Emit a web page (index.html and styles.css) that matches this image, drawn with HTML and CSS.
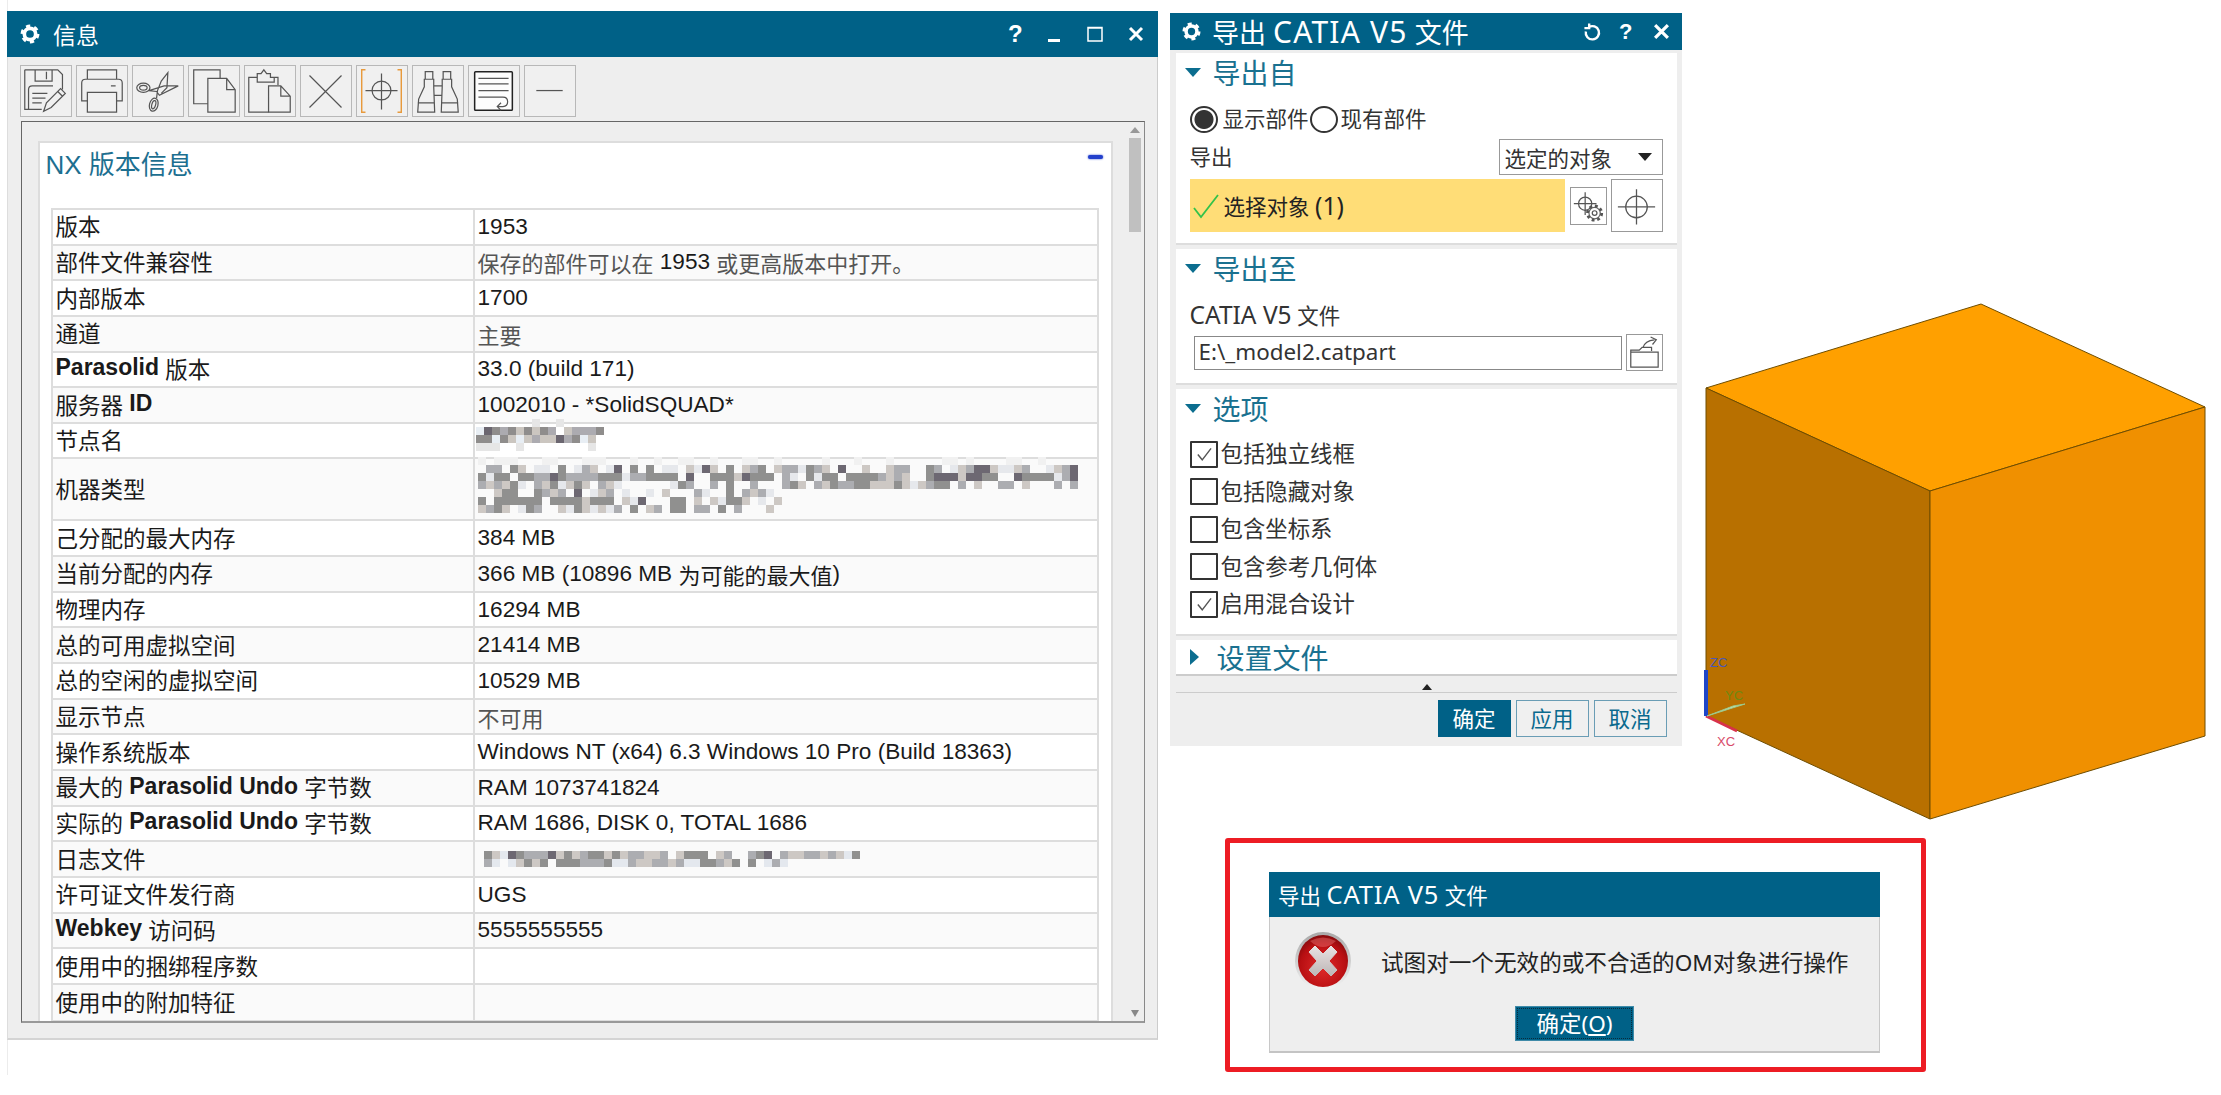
FILE: index.html
```html
<!DOCTYPE html>
<html lang="zh-CN">
<head>
<meta charset="utf-8">
<title>NX 信息与导出 CATIA V5 文件</title>
<link rel="stylesheet" href="styles.css">
</head>
<body>
<div class="desk">
  <div class="edge-line"></div>

  <section class="info">
    <header class="titlebar">
      <svg class="gear" viewBox="0 0 24 24"><circle cx="12" cy="12" r="6.2" class="gear-ring"/><circle cx="12" cy="12" r="8.6" class="gear-teeth"/></svg>
      <span class="info-title">信息</span>
      <span class="tb-spacer"></span>
      <span class="tb-q info-q">?</span>
      <svg class="tb-ic info-min" viewBox="0 0 12 16"><path d="M0 14.5h12" class="w3"/></svg>
      <svg class="tb-ic info-max" viewBox="0 0 16 16"><path d="M1 1.5h14v13.5H1z M1 2h14" class="w15"/></svg>
      <svg class="tb-ic info-x" viewBox="0 0 16 16"><path d="M2 2l12 12M14 2L2 14" class="w3"/></svg>
    </header>

    <div class="toolbar">
      <button class="tool"><svg viewBox="0 0 52 52"><path class="ln" d="M4 3h35l5 5v16M4 3v42h18M15 3v12h18V3M27 5v8M8 45V24q0-4 4-4h22"/><path class="ln" d="M12 28h16M12 33h14M12 38h10"/><path class="ln" d="M24 47l3-9 15-15 5 5-15 15zM39 26l5 5"/></svg></button>
      <button class="tool"><svg viewBox="0 0 52 52"><path class="ln" d="M11 13V3h31v10M11 36H5V17q0-4 4-4h35q4 0 4 4v19h-6M11 27h31v21H11zM36 20h5"/></svg></button>
      <button class="tool"><svg viewBox="0 0 52 52"><ellipse class="ln" cx="11" cy="22" rx="7" ry="5"/><ellipse class="ln" cx="11" cy="22" rx="4" ry="2.5"/><ellipse class="ln" cx="22" cy="40" rx="4.5" ry="7" transform="rotate(15 22 40)"/><ellipse class="ln" cx="22" cy="40" rx="2" ry="4.5" transform="rotate(15 22 40)"/><path class="ln" d="M17 25l8 1 3 4 20-10H33zM25 33l1-8 4-10 7-9-1 16-6 6"/></svg></button>
      <button class="tool"><svg viewBox="0 0 52 52"><path class="ln" d="M20 39H5V3h28v9"/><path class="ln" d="M20 12h20l9 12v24H20zM40 12v12h9"/></svg></button>
      <button class="tool"><svg viewBox="0 0 52 52"><path class="ln" d="M25 48H4V11h9V7h4l3-4 3 4h4v4h8v8M13 11v5h18v-5"/><path class="ln" d="M25 20h13l10 11v17H25zM38 20v11h10"/></svg></button>
      <button class="tool"><svg viewBox="0 0 52 52"><path class="ln" d="M9 9l34 34M43 9L9 43"/></svg></button>
      <button class="tool"><svg viewBox="0 0 52 52"><path class="or" d="M9 3H5v45h4M43 3h4v45h-4"/><circle class="ln" cx="26" cy="25" r="10"/><path class="ln" d="M9 25h34M26 7v38"/></svg></button>
      <button class="tool"><svg viewBox="0 0 52 52"><path class="ln" d="M13 5h8v8h-8zM32 5h8v8h-8zM12 13h10v8l1 27H5l1-14 6-13zM31 13h10v8l6 13 1 14H30l1-27zM22 20h9M22 30h9M5 38h18M30 38h18"/></svg></button>
      <button class="tool"><svg viewBox="0 0 52 52"><rect class="dk" x="6" y="5" width="40" height="41" rx="1"/><path class="ln" d="M10 12h32M10 18h32M10 25h32M10 32h26q5 0 5 5t-5 5h-5m3-4-4 4 4 4"/></svg></button>
      <button class="tool"><svg viewBox="0 0 52 52"><path class="ln" d="M12 25h28"/></svg></button>
    </div>

    <div class="frame">
      <div class="panel">
        <div class="panel-head">
          <h2 class="nx-head">NX 版本信息</h2>
          <span class="collapse"></span>
        </div>
        <div class="table">
          <div class="row"><div class="k">版本</div><div class="v">1953</div></div>
          <div class="row"><div class="k">部件文件兼容性</div><div class="v"><span class="zh dim">保存的部件可以在</span> 1953 <span class="zh dim">或更高版本中打开。</span></div></div>
          <div class="row"><div class="k">内部版本</div><div class="v">1700</div></div>
          <div class="row"><div class="k">通道</div><div class="v"><span class="zh dim">主要</span></div></div>
          <div class="row"><div class="k"><b>Parasolid</b> 版本</div><div class="v">33.0 (build 171)</div></div>
          <div class="row"><div class="k">服务器 <b>ID</b></div><div class="v">1002010 - *SolidSQUAD*</div></div>
          <div class="row"><div class="k">节点名</div><div class="v blur-cell">
            <svg class="mosaic m-node" viewBox="0 0 16 4" shape-rendering="crispEdges">
              <path stroke="#e6e6e6" d="M7 .5h1M10 .5h1M0 3.5h3M5 3.5h1M14 3.5h1"/>
              <path stroke="#6b6670" d="M1 1.5h1M10 2.5h1"/>
              <path stroke="#8f8d8c" d="M2 1.5h1M4 1.5h1M6 1.5h1M8 1.5h1M15 1.5h1M0 2.5h2M3 2.5h1M12 2.5h1"/>
              <path stroke="#acabb0" d="M3 1.5h1M7 2.5h1M9 1.5h1M11 2.5h1M12 1.5h3"/>
              <path stroke="#cbc6c0" d="M5 1.5h1M7 1.5h1M11 1.5h1M4 2.5h1M6 2.5h1M8 2.5h2M14 2.5h1"/>
              <path stroke="#e8eef4" d="M0 1.5h1M2 2.5h1M5 2.5h1M13 2.5h1"/>
            </svg>
          </div></div>
          <div class="row tall"><div class="k">机器类型</div><div class="v blur-cell">
            <svg class="mosaic m-machine" viewBox="0 0 77 6" shape-rendering="crispEdges">
              <path stroke="#6d6872" d="M28 .5h1M45 .5h1M62 .5h2M9 1.5h1M17 .5h1M26 1.5h1M33 1.5h1M57 1.5h3M61 1.5h2M67 1.5h1M74 1.5h1M74 .5h1M12 3.5h1M20 4.5h1M37 4.5h1"/>
              <path stroke="#90908f" d="M4 .5h1M10 .5h1M19 .5h1M21 .5h1M31 .5h1M35 .5h1M41 .5h1M56 .5h1M0 1.5h1M2 1.5h2M5 1.5h2M10 1.5h1M15 1.5h3M21 1.5h4M29 1.5h3M34 1.5h3M41 1.5h1M43 1.5h2M46 1.5h4M56 1.5h1M63 1.5h2M68 1.5h4M4 2.5h1M9 2.5h1M12 2.5h1M25 2.5h1M31 2.5h1M39 2.5h1M44 2.5h1M47 2.5h2M52 2.5h1M57 2.5h2M3 3.5h2M7 3.5h1M14 3.5h1M31 3.5h1M0 4.5h1M2 4.5h5M7 4.5h1M9 4.5h4M14 4.5h3M24 4.5h2M30 4.5h2M31 4.5h2M35 4.5h1M6 5.5h1M12 5.5h1M2 5.5h1M19 5.5h1M24 5.5h2M30 5.5h1"/>
              <path stroke="#acadb1" d="M1 .5h2M13 .5h1M34 .5h1M38 .5h2M42 .5h1M52 .5h1M53 .5h1M57 .5h1M61 .5h1M68 .5h1M73 .5h1M7 1.5h2M11 1.5h4M19 1.5h2M38 1.5h1M50 1.5h3M73 1.5h1M0 2.5h1M2 2.5h1M7 2.5h1M15 2.5h1M26 2.5h1M29 2.5h1M34 2.5h1M38 2.5h1M42 2.5h1M45 2.5h2M50 2.5h1M56 2.5h1M60 2.5h1M65 2.5h2M72 2.5h1M74 2.5h1M8 3.5h1M10 3.5h1M16 3.5h1M27 3.5h1M33 3.5h1M35 3.5h1M1 5.5h1M7 5.5h1M17 5.5h1M22 5.5h1M27 5.5h2M32 5.5h1"/>
              <path stroke="#cdc8c4" d="M5 .5h1M14 .5h1M26 .5h1M29 .5h1M33 .5h1M37 .5h1M43 .5h1M48 .5h1M51 .5h1M60 .5h1M64 .5h1M67 .5h1M72 .5h1M32 1.5h1M51 1.5h1M53 1.5h1M60 1.5h1M1 2.5h1M3 2.5h1M8 2.5h1M11 2.5h1M13 2.5h1M16 2.5h1M40 2.5h1M43 2.5h1M49 2.5h3M53 2.5h1M55 2.5h1M62 2.5h1M68 2.5h1M2 3.5h1M9 3.5h1M15 3.5h1M23 3.5h1M34 3.5h1M13 4.5h1M18 4.5h1M27 4.5h1M29 4.5h1M33 4.5h1M37 4.5h1M0 5.5h1M3 5.5h1M10 5.5h1M13 5.5h1M15 5.5h1M21 5.5h1M36 5.5h1"/>
              <path stroke="#e6e8ec" d="M7 .5h2M12 .5h1M16 .5h1M23 .5h2M27 .5h1M40 .5h1M59 .5h1M65 .5h2M71 .5h1M1 1.5h1M18 1.5h1M39 1.5h1M42 1.5h1M72 1.5h1M5 2.5h1M10 2.5h1M17 2.5h1M24 2.5h1M54 2.5h1M14 3.5h1M18 3.5h1M21 3.5h1M28 3.5h1M36 3.5h1M19 4.5h1M30 4.5h1M35 4.5h1M5 5.5h1M11 5.5h1M14 5.5h1M16 5.5h1"/>
              <path stroke="#f1f1f1" d="M0 -.5h1M2 -.5h3M8 -.5h2M13 -.5h3M19 -.5h1M22 -.5h1M25 -.5h2M29 -.5h1M33 -.5h2M37 -.5h1M43 -.5h1M47 -.5h1M51 -.5h1M58 -.5h2M61 -.5h1M66 -.5h2M70 -.5h1"/>
            </svg>
          </div></div>
          <div class="row"><div class="k">己分配的最大内存</div><div class="v">384 MB</div></div>
          <div class="row"><div class="k">当前分配的内存</div><div class="v">366 MB (10896 MB <span class="zh">为可能的最大值</span>)</div></div>
          <div class="row"><div class="k">物理内存</div><div class="v">16294 MB</div></div>
          <div class="row"><div class="k">总的可用虚拟空间</div><div class="v">21414 MB</div></div>
          <div class="row"><div class="k">总的空闲的虚拟空间</div><div class="v">10529 MB</div></div>
          <div class="row"><div class="k">显示节点</div><div class="v"><span class="zh dim">不可用</span></div></div>
          <div class="row"><div class="k">操作系统版本</div><div class="v">Windows NT (x64) 6.3 Windows 10 Pro (Build 18363)</div></div>
          <div class="row"><div class="k">最大的 <b>Parasolid Undo</b> 字节数</div><div class="v">RAM 1073741824</div></div>
          <div class="row"><div class="k">实际的 <b>Parasolid Undo</b> 字节数</div><div class="v">RAM 1686, DISK 0, TOTAL 1686</div></div>
          <div class="row"><div class="k">日志文件</div><div class="v blur-cell">
            <svg class="mosaic m-log" viewBox="0 0 46 2" shape-rendering="crispEdges">
              <path stroke="#6d6872" d="M3 .5h1M8 .5h1M35 .5h1"/>
              <path stroke="#90908f" d="M0 .5h1M4 .5h1M10 .5h1M13 .5h2M16 .5h1M25 .5h3M34 .5h1M5 1.5h1M7 1.5h1M9 1.5h3M15 1.5h1M27 1.5h2M31 1.5h1M33 1.5h1M46 .5h1"/>
              <path stroke="#acadb1" d="M5 .5h3M12 .5h1M18 .5h2M22 .5h1M30 .5h1M33 .5h1M37 .5h1M0 1.5h1M12 1.5h3M18 1.5h1M21 1.5h2M24 1.5h1M29 1.5h1M36 1.5h1M40 .5h2M43 .5h1"/>
              <path stroke="#cdc8c4" d="M1 .5h1M9 .5h1M11 .5h1M15 .5h1M17 .5h1M20 .5h2M24 .5h1M29 .5h1M38 .5h1M4 1.5h1M6 1.5h1M19 1.5h2M23 1.5h1M30 1.5h1M39 .5h1M42 .5h1M44 .5h1"/>
              <path stroke="#e4e8ee" d="M2 .5h1M16 1.5h2M25 1.5h2M1 1.5h1M3 1.5h1M35 1.5h1M37 1.5h1M45 .5h1"/>
            </svg>
          </div></div>
          <div class="row"><div class="k">许可证文件发行商</div><div class="v">UGS</div></div>
          <div class="row"><div class="k"><b>Webkey</b> 访问码</div><div class="v">5555555555</div></div>
          <div class="row"><div class="k">使用中的捆绑程序数</div><div class="v"></div></div>
          <div class="row"><div class="k">使用中的附加特征</div><div class="v"></div></div>
        </div>
      </div>
      <div class="scroll">
        <span class="sc-up"></span>
        <span class="sc-thumb"></span>
        <span class="sc-fill"></span>
        <span class="sc-down"></span>
      </div>
    </div>
  </section>

  <section class="export">
    <header class="titlebar ex-bar">
      <svg class="gear ex-gear" viewBox="0 0 24 24"><circle cx="12" cy="12" r="6.2" class="gear-ring"/><circle cx="12" cy="12" r="8.6" class="gear-teeth"/></svg>
      <span class="ex-title">导出 <span class="la">CATIA V5</span> 文件</span>
      <span class="tb-spacer"></span>
      <svg class="ex-ic" viewBox="0 0 20 20"><path d="M6 5.5a7 7 0 1 1-3 4.5M6.5 1.5v5h-5" class="w25"/></svg>
      <span class="tb-q ex-q">?</span>
      <svg class="ex-ic ex-close" viewBox="0 0 16 16"><path d="M2 2l12 12M14 2L2 14" class="w3"/></svg>
    </header>
    <div class="ex-body">
      <div class="sec sec-a">
        <div class="sec-head"><span class="tri"></span>导出自</div>
        <div class="radios">
          <span class="radio on"></span><span class="lbl">显示部件</span>
          <span class="radio"></span><span class="lbl">现有部件</span>
        </div>
        <div class="sel-row">
          <span class="lbl">导出</span>
          <div class="select"><span>选定的对象</span><i class="caret"></i></div>
        </div>
        <div class="pick-row">
          <div class="pick">
            <svg class="tick" viewBox="0 0 28 26"><path d="M2 15l7 9L26 2"/></svg>
            <span class="pick-text">选择对象 <span class="la">(1)</span></span>
          </div>
          <button class="mini"><svg viewBox="0 0 36 36"><circle class="ln" cx="15" cy="15" r="7"/><path class="ln" d="M15 3v24M3 15h24"/><circle class="ln wb" cx="25" cy="25" r="6"/><circle class="ln dash" cx="25" cy="25" r="7.5"/><circle class="ln" cx="25" cy="25" r="2.5"/></svg></button>
          <button class="big"><svg viewBox="0 0 50 50"><circle class="ln" cx="25" cy="26" r="11"/><path class="ln" d="M25 8v36M6 26h38"/></svg></button>
        </div>
      </div>
      <div class="sec sec-b">
        <div class="sec-head"><span class="tri"></span>导出至</div>
        <div class="lbl file-lbl"><span class="la">CATIA V5</span> 文件</div>
        <div class="file-row">
          <div class="input">E:\_model2.catpart</div>
          <button class="browse"><svg viewBox="0 0 36 36"><path class="ln" d="M4 33V15h9l3-3h10v4M4 17h29v16H4zM17 12q2-7 12-8M25 1l6 3-4 5"/></svg></button>
        </div>
      </div>
      <div class="sec sec-c">
        <div class="sec-head"><span class="tri"></span>选项</div>
        <div class="checks">
          <div class="check"><span class="box"><svg viewBox="0 0 26 26"><path d="M6 13l5 6L21 6"/></svg></span><span class="lbl">包括独立线框</span></div>
          <div class="check"><span class="box"></span><span class="lbl">包括隐藏对象</span></div>
          <div class="check"><span class="box"></span><span class="lbl">包含坐标系</span></div>
          <div class="check"><span class="box"></span><span class="lbl">包含参考几何体</span></div>
          <div class="check"><span class="box"><svg viewBox="0 0 26 26"><path d="M6 13l5 6L21 6"/></svg></span><span class="lbl">启用混合设计</span></div>
        </div>
      </div>
      <div class="sec sec-d">
        <div class="sec-head"><span class="tri right"></span>设置文件</div>
      </div>
      <div class="strip"><span class="up"></span></div>
      <div class="actions">
        <button class="btn primary">确定</button>
        <button class="btn">应用</button>
        <button class="btn">取消</button>
      </div>
    </div>
  </section>

  <svg class="cube" viewBox="0 0 520 530">
    <polygon points="6,94 281,10 505,113 230,197" fill="#ffa000" stroke="#6e4d00"/>
    <polygon points="6,94 230,197 230,525 6,422" fill="#b87000" stroke="#6e4d00"/>
    <polygon points="230,197 505,113 505,442 230,525" fill="#f09000" stroke="#6e4d00"/>
    <path d="M6 422l31 15" stroke="#d8324a" stroke-width="3"/>
    <path d="M6 422V376" stroke="#1e46c8" stroke-width="4"/>
    <path d="M7 422l38-12-12 2z" fill="#c8e6b0" stroke="#9cc88c"/>
    <text x="10" y="373" class="axis" fill="#4a58b8">ZC</text>
    <text x="25" y="406" class="axis" fill="#6f8a10">YC</text>
    <text x="17" y="452" class="axis" fill="#d84a6a">XC</text>
  </svg>

  <div class="alert-frame">
    <div class="alert">
      <div class="alert-title">导出 <span class="la-sm">CATIA V5</span> 文件</div>
      <div class="alert-body">
        <div class="alert-msg">
          <svg class="err" viewBox="0 0 56 58">
            <defs>
              <radialGradient id="rg" cx=".5" cy=".62" r=".65"><stop offset="0" stop-color="#e02a2a"/><stop offset=".7" stop-color="#b80f12"/><stop offset="1" stop-color="#7d0a0c"/></radialGradient>
              <linearGradient id="rim" x1="0" y1="0" x2="0" y2="1"><stop offset="0" stop-color="#a8a8a8"/><stop offset="1" stop-color="#f4f4f4"/></linearGradient>
              <linearGradient id="xg" x1="0" y1="0" x2="0" y2="1"><stop offset="0" stop-color="#e8e2e2"/><stop offset="1" stop-color="#bdb6b6"/></linearGradient>
            </defs>
            <ellipse cx="28" cy="29" rx="28" ry="29" fill="url(#rim)"/>
            <ellipse cx="28" cy="29" rx="25" ry="26" fill="url(#rg)"/>
            <path d="M15 9q13-7 26 0q-13 12-26 0z" fill="#e87070" opacity=".45"/>
            <path d="M14 20l6-6 8 8 8-8 6 6-8 9 8 9-6 6-8-8-8 8-6-6 8-9z" fill="url(#xg)" stroke="url(#xg)" stroke-linejoin="round"/>
          </svg>
          <span>试图对一个无效的或不合适的OM对象进行操作</span>
        </div>
        <button class="alert-btn"><span class="dots">确定(<u>O</u>)</span></button>
      </div>
    </div>
  </div>
</div>
</body>
</html>
```

FILE: styles.css
```css
* { box-sizing: border-box; }
html, body { margin: 0; padding: 0; background: #fff; }
body { font-family: "Noto Sans", "Noto Sans CJK SC", sans-serif; color: #222; }
button { padding: 0; font: inherit; cursor: default; }
svg { display: block; }

.desk { position: relative; width: 2221px; height: 1095px; overflow: hidden; background: #fff; }
.edge-line { position: absolute; left: 7px; top: 0; width: 1px; height: 1075px; background: #ececec; }

/* shared stroke classes */
.ln { fill: none; stroke: #555; stroke-width: 1.3; }
.or { fill: none; stroke: #e89a3c; stroke-width: 1.5; }
.dk { fill: #fdfdfd; stroke: #222; stroke-width: 1.6; }
.w3 { fill: none; stroke: #fff; stroke-width: 3; }
.w15 { fill: none; stroke: #fff; stroke-width: 1.5; }
.w25 { fill: none; stroke: #fff; stroke-width: 2.5; }

/* title bars */
.titlebar { display: flex; align-items: center; background: #006187; color: #fff; }
.tb-spacer { flex: 1; }
.gear { width: 22px; height: 22px; flex: none; }
.gear-ring { fill: none; stroke: #fff; stroke-width: 4; }
.gear-teeth { fill: none; stroke: #fff; stroke-width: 3.4; stroke-dasharray: 4.5 4.5; }
.tb-q { font-family: "Liberation Sans", sans-serif; font-weight: 700; color: #fff; }

/* info window */
.info { position: absolute; left: 7px; top: 11px; width: 1151px; height: 1029px; background: #eee; border-right: 1px solid #ccc; border-bottom: 2px solid #d4d4d4; border-left: 1px solid #ddd; }
.info > .titlebar { height: 46px; margin: 0 -1px 0 -1px; padding-left: 12px; }
.info-title { margin-left: 12px; font-size: 23px; }
.info-q { font-size: 24px; width: 14px; margin-right: 26px; }
.tb-ic { flex: none; }
.info-min { width: 12px; height: 16px; margin-right: 27px; }
.info-max { width: 16px; height: 16px; margin-right: 25px; }
.info-x { width: 16px; height: 16px; margin-right: 14px; }

.toolbar { display: flex; gap: 4px; padding: 8px 0 0 12px; }
.tool { width: 52px; height: 52px; background: #f0f0f0; border: 1.5px solid #b8b8b8; flex: none; display: block; }
.tool svg { width: 49px; height: 49px; }

.frame { display: flex; width: 1124px; height: 902px; margin: 4px 0 0 12.5px; padding: 19px 0 0 16px; border: 1px solid #666; border-bottom: 2px solid #999; border-right-color: #888; overflow: hidden; }
.panel { width: 1075px; height: 900px; padding: 0 13px 0 11px; background: #fff; border: 2px solid #ddd; flex: none; }
.panel-head { display: flex; height: 65px; justify-content: space-between; padding-top: 2px; }
.nx-head { margin: 0 0 0 -5px; font-weight: 400; font-size: 26px; line-height: 40px; color: #1d6f90; font-family: "Liberation Sans", "Noto Sans CJK SC", sans-serif; }
.collapse { width: 15px; height: 4px; margin: 10px -5px 0 0; background: #2340cc; box-shadow: 0 0 2px #2340cc; border-radius: 2px; }

.table { border: 2px solid #ddd; border-bottom-width: 2px; width: 1048px; font-family: "Liberation Sans", "Noto Sans CJK SC", sans-serif; }
.row { display: flex; height: 35.65px; border-bottom: 2px solid #ddd; background: #fff; color: #222; }
.row:nth-child(even) { background: #fafafa; }
.row:last-child { border-bottom: 0; height: 35px; }
.row.tall { height: 62px; }
.k { width: 422px; flex: none; display: flex; align-items: center; padding: 0 0 3px 3px; font-size: 22.5px; border-right: 2px solid #ddd; white-space: pre; color: #1a1a1a; }
.k b { font-size: 23px; }
.v { flex: 1; display: flex; align-items: center; padding-left: 3px; font-size: 22.6px; white-space: pre; color: #1a1a1a; }
.zh { font-size: 22px; }
.dim { color: #555; }
.blur-cell { position: relative; }
.mosaic { position: absolute; fill: none; stroke-width: 1; }
.m-node { left: 1px; top: -5px; width: 128px; height: 32px; overflow: visible; }
.m-machine { left: 3px; top: 6px; width: 616px; height: 48px; overflow: visible; }
.m-log { left: 9px; top: 9px; width: 368px; height: 16px; overflow: visible; }

.scroll { width: 12px; margin-left: 16px; flex: none; position: relative; display: flex; flex-direction: column; align-items: center; margin-top: -14px; }
.sc-up { width: 0; height: 0; border: 5px solid transparent; border-top: 0; border-bottom: 6px solid #999; margin-bottom: 5px; }
.sc-thumb { width: 12px; height: 94px; background: #c0c0c0; }
.sc-fill { flex: 1; }
.sc-down { width: 0; height: 0; border: 4px solid transparent; border-bottom: 0; border-top: 7px solid #888; margin-bottom: 4px; }

/* export dialog */
.export { position: absolute; left: 1170px; top: 13px; width: 512px; height: 733px; background: #eee; font-family: "Noto Sans", "Noto Sans CJK SC", sans-serif; }
.ex-bar { height: 37px; padding-left: 11px; }
.ex-gear { width: 21px; height: 21px; }
.ex-title { margin-left: 10px; font-size: 27px; line-height: 37px; white-space: pre; }
.ex-title .la { font-size: 30px; letter-spacing: 1.2px; }
.la { font-size: 1.14em; }
.la-sm { font-size: 25.5px; letter-spacing: .8px; }
.ex-ic { width: 19px; height: 19px; flex: none; }
.ex-q { font-size: 22px; width: 14px; margin: 0 20px 0 17px; }
.ex-close { width: 17px; height: 17px; margin-right: 12px; }

.ex-body { padding: 3px 5.5px 0; }
.sec { background: #fff; padding: 0 14px; margin-bottom: 4px; border-bottom: 2px solid #ddd; }
.sec-a { height: 192px; }
.sec-b { height: 136px; }
.sec-c { height: 247px; }
.sec-d { height: 36px; margin-bottom: 0; border-bottom-color: #ccc; }
.sec-head { display: flex; align-items: center; height: 38px; font-size: 28px; color: #1a7190; margin-left: -5px; }
.sec-d .sec-head { height: 34px; }
.tri { width: 0; height: 0; border: 8px solid transparent; border-bottom: 0; border-top: 9px solid #0b6d8f; margin-right: 12px; flex: none; }
.tri.right { border: 8px solid transparent; border-right: 0; border-left: 9px solid #0b6d8f; margin: 0 18px 0 5px; }
.lbl { font-size: 21.5px; line-height: 26px; color: #333; white-space: pre; }
.check .lbl { font-size: 22.4px; }

.radios { display: flex; align-items: center; height: 26px; margin-top: 15px; }
.radios .lbl { margin-left: 5px; }
.radio { width: 28px; height: 27px; border: 2px solid #333; border-radius: 50%; background: #fff; flex: none; }
.radio.on { background: radial-gradient(circle, #333 0, #333 9px, #fff 10px); }
.radio + .lbl + .radio { margin-left: 1px; }
.radio + .lbl + .radio + .lbl { margin-left: 3px; }

.sel-row { display: flex; align-items: center; justify-content: space-between; height: 36px; margin-top: 7px; }
.select { display: flex; align-items: center; justify-content: space-between; width: 164px; height: 36px; border: 1.5px solid #999; padding: 0 10px 0 5px; font-size: 21.5px; background: #fff; color: #333; }
.caret { width: 0; height: 0; border: 7px solid transparent; border-bottom: 0; border-top: 8px solid #222; }

.pick-row { display: flex; align-items: flex-start; margin-top: 4px; }
.pick { display: flex; align-items: center; width: 375px; height: 53px; padding-left: 2px; background: #ffdd77; flex: none; }
.tick { width: 28px; height: 26px; flex: none; }
.tick path { fill: none; stroke: #33c24a; stroke-width: 1.8; }
.pick-text { margin-left: 4px; font-size: 21.5px; color: #222; white-space: pre; }
.mini { width: 37px; height: 38px; margin: 8px 0 0 5px; background: #fff; border: 1.5px solid #999; flex: none; }
.mini svg { width: 34px; height: 35px; }
.ln.wb { fill: #fff; stroke: #666; }
.ln.dash { stroke-width: 3; stroke-dasharray: 3 2.9; }
.big { width: 52px; height: 53px; margin-left: 4px; background: #fff; border: 1.5px solid #999; flex: none; }
.big svg { width: 49px; height: 50px; }

.file-lbl { margin-top: 14px; height: 28px; line-height: 28px; }
.file-row { display: flex; align-items: center; gap: 4px; height: 37px; margin-top: 5px; padding-left: 4px; }
.input { width: 428px; height: 34px; border: 1.5px solid #888; padding-left: 4px; font-size: 22.4px; line-height: 30px; color: #333; background: #fff; }
.browse { width: 37px; height: 37px; background: #fff; border: 1.5px solid #999; flex: none; }
.browse svg { width: 34px; height: 34px; }

.checks { display: flex; flex-direction: column; gap: 11.5px; margin-top: 14px; }
.check { display: flex; align-items: center; height: 26px; }
.box { width: 28px; height: 27px; border: 2px solid #333; background: #fff; flex: none; margin-right: 3px; border-radius: 1px; }
.box svg { width: 24px; height: 23px; }
.box path { fill: none; stroke: #555; stroke-width: 1.6; }

.strip { height: 17px; display: flex; justify-content: center; align-items: center; border-bottom: 1px solid #ccc; padding-top: 5px; padding-left: 1px; }
.up { width: 0; height: 0; border: 5px solid transparent; border-top: 0; border-bottom: 6px solid #222; }
.actions { display: flex; justify-content: flex-end; gap: 5px; padding: 7px 10px 0 0; }
.btn { width: 73px; height: 37px; background: #f0f0f0; color: #0b6a8e; border: 1.5px solid #6a9db5; font-size: 21.5px; line-height: 1; font-family: inherit; }
.btn.primary { background: #006187; color: #fff; border-color: #006187; }

/* cube */
.cube { position: absolute; left: 1700px; top: 294px; width: 520px; height: 530px; }
.cube polygon { stroke-width: 1; stroke-linejoin: round; }
.axis { font-family: "Liberation Sans", sans-serif; font-size: 13px; }

/* alert */
.alert-frame { position: absolute; left: 1225px; top: 838px; width: 701px; height: 234px; padding: 29px 0 0 39px; border: 5px solid #ed1c24; border-radius: 3px; }
.alert { width: 611px; height: 181px; background: #eee; border: 1px solid #c8c8c8; border-top: 0; border-bottom: 2px solid #c4c4c4; }
.alert-title { height: 45px; margin: 0 -1px; padding-left: 9px; background: #006187; color: #fff; font-size: 21.5px; line-height: 45px; white-space: pre; }
.alert-body { display: flex; flex-direction: column; align-items: center; }
.alert-msg { display: flex; align-items: center; align-self: flex-start; height: 58px; margin: 15px 0 0 24px; font-size: 22.6px; color: #222; white-space: pre; }
.err { width: 58px; height: 58px; margin-right: 29px; flex: none; }
.alert-btn { width: 119px; height: 35px; margin: 16px 0 0 0; background: #006187; border: 1px solid #3f8aa8; color: #fff; font-size: 22.5px; padding: 1px; font-family: inherit; }
.dots { display: block; height: 100%; border: 1px dotted #082c3c; line-height: 29px; }
```
